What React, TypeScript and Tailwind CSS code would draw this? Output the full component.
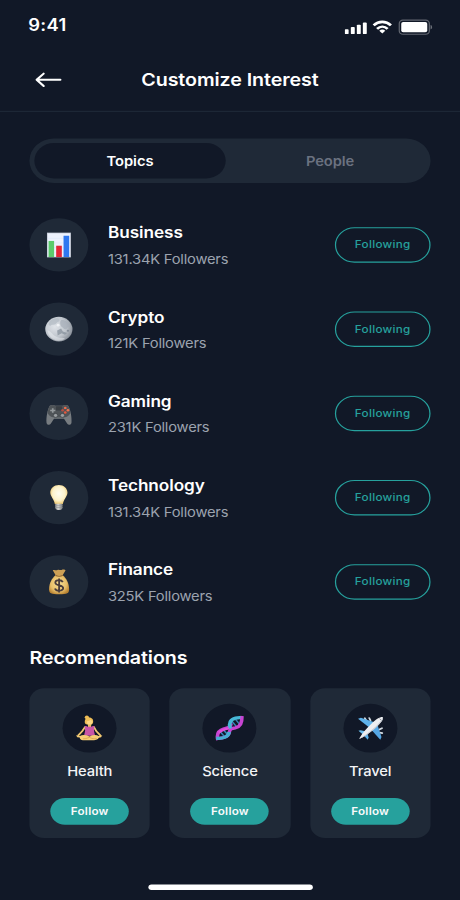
import React from 'react';

function ChartIcon() {
  return (
    <svg viewBox="0 0 24 24" className="size-6">
      <rect x="2.3" y="0.9" width="19.5" height="22.3" fill="#c9cfdb" />
      <rect x="3" y="1.6" width="18.1" height="21" fill="#edf2fd" />
      <path d="M3 6H21M3 10.2H21M3 14.4H21M3 18.6H21" stroke="#dbe4f6" strokeWidth="0.4" />
      <rect x="3.6" y="8.4" width="4.5" height="14.5" fill="#5ccb6b" />
      <rect x="9.8" y="12.7" width="4.6" height="10.2" fill="#e32636" />
      <rect x="15.8" y="3.7" width="4.6" height="19.2" fill="#2f78f0" />
    </svg>
  );
}

function MoonIcon() {
  return (
    <svg viewBox="0 0 24 24" className="size-6">
      <defs>
        <radialGradient id="moon" cx="0.35" cy="0.4" r="0.7">
          <stop offset="0" stopColor="#dfe3e8" />
          <stop offset="0.6" stopColor="#c0c6cd" />
          <stop offset="1" stopColor="#858c95" />
        </radialGradient>
      </defs>
      <circle cx="12" cy="11.9" r="11.1" fill="url(#moon)" />
      <path d="M5 4.5C8 1.8 11 1.6 12.4 3.2C13 5 10.5 5.2 9.6 7.2C8.6 8.8 6.8 7.2 5.2 8.8C3.6 9.2 3 7 5 4.5Z" fill="#b2bac3" opacity="0.7" />
      <path d="M14 3.6C17 3.6 20 5.4 20.8 8.6C21 10.6 19 9.6 18.6 11.4C17.2 13 15.6 11 14.6 10C12.8 8.6 12.6 5 14 3.6Z" fill="#a3abb6" opacity="0.65" />
      <path d="M10.6 13.2L13.8 11.4L15.2 14.2L18.8 15.4L17 17L14.2 15.6L11 17.6Z" fill="#87919c" opacity="0.75" />
      <path d="M2.6 13C6 14 7 18 11 19.2C14 20 15.6 19.4 17 20.6C11 25 3.6 20.6 2.6 13Z" fill="#eceff3" opacity="0.5" />
      <circle cx="11.4" cy="8.4" r="1.2" fill="#eef1f4" />
      <circle cx="19.4" cy="13.4" r="1" fill="#848d98" />
    </svg>
  );
}

function GamepadIcon() {
  return (
    <svg viewBox="0 0 24 24" className="size-6">
      <path d="M4.6 5C6 4.2 8 4.4 9 5.1H15.2C16.4 4.3 18.4 4.2 19.6 5C21.6 8.6 22.6 15.4 22.3 20.2C22.2 22.4 19.8 23 18.7 21.2L16.2 16.8H8L5.5 21.2C4.4 23 2 22.4 1.9 20.2C1.6 15.4 2.6 8.6 4.6 5Z" fill="#777c80" />
      <path d="M4.6 5C6 4.2 8 4.4 9 5.1H15.2C16.4 4.3 18.4 4.2 19.6 5C20.6 7 21.4 9.8 21.3 12C19.4 14.8 17.8 15.6 15.4 15.6H8.8C6.4 15.6 4.8 14.8 2.9 12C2.8 9.8 3.6 7 4.6 5Z" fill="#4f5458" />
      <rect x="9.6" y="5.6" width="5" height="3.8" rx="0.5" fill="#3a3f44" />
      <path d="M7 7.3V11.5M4.9 9.4H9.1" stroke="#94999c" strokeWidth="1.4" />
      <circle cx="17.2" cy="7" r="1.1" fill="#ed6a4c" />
      <circle cx="17.2" cy="11.2" r="1.1" fill="#e8583c" />
      <circle cx="15" cy="9.1" r="1.1" fill="#b44e43" />
      <circle cx="19.4" cy="9.1" r="1.1" fill="#f0714f" />
      <circle cx="9.3" cy="13.8" r="1.8" fill="#9a9ea1" stroke="#3a3f43" strokeWidth="0.6" />
      <circle cx="14.9" cy="13.8" r="1.8" fill="#9a9ea1" stroke="#3a3f43" strokeWidth="0.6" />
    </svg>
  );
}

function BulbIcon() {
  return (
    <svg viewBox="0 0 24 24" className="size-6">
      <defs>
        <radialGradient id="glow" cx="0.5" cy="0.45" r="0.58">
          <stop offset="0" stopColor="#fffdf0" />
          <stop offset="0.62" stopColor="#fdf3cb" />
          <stop offset="1" stopColor="#eec568" />
        </radialGradient>
        <linearGradient id="cap" x1="0" x2="1">
          <stop offset="0" stopColor="#85888a" />
          <stop offset="0.4" stopColor="#d8d8d5" />
          <stop offset="1" stopColor="#73777b" />
        </linearGradient>
      </defs>
      <path d="M12 0.5C16 0.5 19 3.5 19 7.4C19 10.9 15.9 13.5 15.3 17.8H8.7C8.1 13.5 5 10.9 5 7.4C5 3.5 8 0.5 12 0.5Z" fill="url(#glow)" />
      <path d="M9 17.5H15V21.2C15 22.5 13.4 23.2 12 23.2C10.6 23.2 9 22.5 9 21.2Z" fill="url(#cap)" />
      <path d="M9 19.2H15M9 20.9H15" stroke="#8d8f8f" strokeWidth="0.5" />
    </svg>
  );
}

function MoneyBagIcon() {
  return (
    <svg viewBox="0 0 24 24" className="size-6">
      <defs>
        <radialGradient id="bag" cx="0.48" cy="0.45" r="0.6">
          <stop offset="0" stopColor="#f8df94" />
          <stop offset="0.65" stopColor="#e8bf6a" />
          <stop offset="1" stopColor="#b98332" />
        </radialGradient>
      </defs>
      <path d="M7 1.6C8.4 0.6 9.4 2 10.8 1.3C12 0.6 13 1.7 14.2 1.2C15.6 0.6 17.2 1 17.4 1.8L14.8 6.4H9.6Z" fill="#cda055" />
      <path d="M9.4 5.8H15C18 8.6 20.3 13 20.3 18.6C20.3 22.4 18.8 23.1 12.2 23.1C5.6 23.1 4 22.4 4 18.6C4 13 6.4 8.6 9.4 5.8Z" fill="url(#bag)" />
      <path d="M9.3 6.2C11 6.9 13.6 6.9 15.2 6.1" stroke="#8c6230" strokeWidth="0.9" fill="none" />
      <path d="M15.2 12.2C14.6 10.9 13.5 10.4 12.2 10.4C10.4 10.4 9.1 11.3 9.1 12.8C9.1 16 15.5 14.2 15.5 17.6C15.5 19.1 14.1 20 12.2 20C10.6 20 9.3 19.3 8.8 17.9M12.2 8.9V21.5" stroke="#4a3d3c" strokeWidth="1.5" fill="none" />
    </svg>
  );
}

function YogaIcon() {
  return (
    <svg viewBox="0 0 24 24" className="size-6">
      <circle cx="9.8" cy="2.2" r="1.7" fill="#eebc55" />
      <path d="M8.2 7.4C7.6 3.8 9.6 2.3 11.6 2.3C14.2 2.3 15.4 4.4 14.8 7.2C14.3 9.4 8.8 9.6 8.2 7.4Z" fill="#f0bf58" />
      <path d="M9.6 5.8C11 5.8 12.2 5.1 12.9 4.4C13.4 5 14 5.3 14.4 5.7C14.3 8.2 13.2 9.4 12 9.4C10.8 9.4 9.8 8.2 9.6 5.8Z" fill="#fbd885" />
      <path d="M10.7 8.6H13.3V11H10.7Z" fill="#edbb62" />
      <path d="M8.4 10.8L6 14.8L2.8 18.5M15.5 10.8L17.6 14.8L20.8 18.5" stroke="#f0c670" strokeWidth="1.5" fill="none" strokeLinejoin="round" strokeLinecap="round" />
      <path d="M8 10.2C9.4 9.8 10 10.2 10.4 10.8H13.5C14 10.2 14.8 9.8 16 10.2L15.6 14.4L16.5 18.8H7.5L8.4 14.4Z" fill="#c755a7" />
      <path d="M1 18.4L4.2 19.1C6 17.8 9.2 17.9 11.9 19.5C14.6 17.9 17.6 17.8 19.4 19.1L22.4 18.4L21.4 20.2L19.6 20.6C18.8 22.4 16.6 22.9 13.6 22.9H6.6C4.8 22.9 4 21.8 4 20.5L2 20.2Z" fill="#f6cd74" />
      <path d="M6.6 21.6C9.4 21.7 11 20.5 12.8 19.8M17.8 21.4C15.4 21.8 14 21.3 12.6 20.7" stroke="#c98f3e" strokeWidth="0.5" fill="none" />
    </svg>
  );
}

function DnaIcon() {
  return (
    <svg viewBox="0 0 24 24" className="size-6">
      <g fill="none">
        <path d="M4.6 15.2L8 19.6M7.4 13.8L10.4 17.4M14.2 5.8L17.6 10.4M17.2 4.2L20.4 8.6" stroke="#3485b6" strokeWidth="1.3" />
        <path d="M2.6 22.8C1.4 17.4 3.4 13.8 7.6 12.5C11 11.5 13.2 11.2 13.4 7.6" stroke="#c744d2" strokeWidth="2.9" />
        <path d="M1.2 21C7 21.6 11.2 19.6 11.9 15.8C12.4 12.6 13.8 12.2 16.8 11.7C20.4 11 22.6 7.6 22.1 1.4" stroke="#c744d2" strokeWidth="2.9" />
        <path d="M1.2 21C7 21.6 11.2 19.6 11.9 15.4" stroke="#44aed2" strokeWidth="3" />
        <path d="M12.6 12.4C11.4 7.4 12.8 3.9 17 2.9C19.2 2.4 20.8 2.6 22 2.4" stroke="#47b8d8" strokeWidth="3" />
        <path d="M3.4 16C5.6 13.4 9 12.8 11.6 12" stroke="#e04ed8" strokeWidth="2" />
        <path d="M22.3 1L21.9 5" stroke="#c744d2" strokeWidth="2.4" />
      </g>
    </svg>
  );
}

function PlaneIcon() {
  return (
    <svg viewBox="0 0 24 24" className="size-6">
      <path d="M7.4 3L8.6 5.2M11 2.8L12 5M21.4 12L19.2 13.2M21.6 16.4L19.6 16" stroke="#d3dae1" strokeWidth="1.5" strokeLinecap="round" />
      <path d="M1.9 3.4L4.2 2.5L16.4 7L11.8 12Z" fill="#5fb2ea" />
      <path d="M17.4 8L21 20L20 22.4L12 12.4Z" fill="#55a6e4" />
      <path d="M2.2 14.4L4 13.9L9.6 15.2L6.6 18.4Z" fill="#6cbdee" />
      <path d="M9 14.8L10.5 20.4L9.8 22.4L6 17.8Z" fill="#5aaee8" />
      <path d="M2.8 21.8C4.2 18.2 8.4 12.6 12.8 8C16.2 4.3 19.6 1.8 22 2C23 3.9 20.2 7.8 16.8 11.1C12 15.7 6.4 20.2 2.8 21.8Z" fill="#edeef1" />
      <path d="M2.8 21.8C7 18.9 13 13.8 16.6 10.2C19.2 7.4 21.2 5 22 2C23 3.9 20.2 7.8 16.8 11.1C12 15.7 6.4 20.2 2.8 21.8Z" fill="#c2c6cd" />
      <path d="M19.4 3.4L20.7 4.7" stroke="#6b7280" strokeWidth="0.6" />
    </svg>
  );
}

const topics = [
  { name: 'Business', followers: '131.34K Followers', Icon: ChartIcon },
  { name: 'Crypto', followers: '121K Followers', Icon: MoonIcon },
  { name: 'Gaming', followers: '231K Followers', Icon: GamepadIcon },
  { name: 'Technology', followers: '131.34K Followers', Icon: BulbIcon },
  { name: 'Finance', followers: '325K Followers', Icon: MoneyBagIcon },
];

const suggestions = [
  { name: 'Health', Icon: YogaIcon },
  { name: 'Science', Icon: DnaIcon },
  { name: 'Travel', Icon: PlaneIcon },
];

function StatusBar() {
  return (
    <div className="flex h-11 items-start justify-between pl-[23px] pr-[22px]">
      <span className="pt-[13px] text-[15px] font-semibold leading-5 tracking-[0.25px]">9:41</span>
      <svg viewBox="281 17 72 15" className="mt-[17px] h-[15px] w-[72px]">
        <g fill="#fff">
          <rect x="281" y="26.3" width="3.2" height="4.4" rx="0.8" />
          <rect x="286" y="24.3" width="3.2" height="6.4" rx="0.8" />
          <rect x="290.9" y="22.3" width="3.2" height="8.4" rx="0.8" />
          <rect x="295.8" y="20.4" width="3.2" height="10.3" rx="0.8" />
        </g>
        <g fill="none" stroke="#fff" strokeWidth="2.3">
          <path d="M304.6 22.8C308.6 18.7 314.7 18.7 318.7 22.8" />
          <path d="M307.4 26C310 23.4 313.4 23.4 316 26" />
        </g>
        <path d="M309.2 27.7C310.8 26.4 312.6 26.4 314.1 27.7L311.65 30.2Z" fill="#fff" />
        <rect x="325.5" y="18.2" width="24.5" height="12.7" rx="3" fill="none" stroke="#fff" strokeOpacity="0.34" />
        <rect x="327.1" y="19.9" width="21.2" height="9.2" rx="1.6" fill="#fff" />
        <path d="M351 22.6C352.7 23.1 352.7 26.1 351 26.6Z" fill="#fff" fillOpacity="0.38" />
      </svg>
    </div>
  );
}

export default function App() {
  return (
    <div className="h-[900px] w-[460px] overflow-hidden bg-[#111827]">
      <div className="flex h-[812px] w-[375px] origin-top-left scale-x-[1.22667] scale-y-[1.10837] flex-col font-['Inter',sans-serif] text-white">
        <StatusBar />
        <header className="grid h-[57px] grid-cols-[1fr_auto_1fr] items-center border-b border-[#1f2937] px-6">
          <button aria-label="Back" className="pl-1">
            <svg viewBox="0 0 24 24" className="size-6" fill="none" stroke="#fff" strokeWidth="1.8" strokeLinecap="round" strokeLinejoin="round">
              <path d="M21.2 12H2M7.6 6.4L1.9 12L7.6 17.6" />
            </svg>
          </button>
          <h1 className="pt-[0.4px] text-base font-semibold leading-6 tracking-[-0.05px]">Customize Interest</h1>
        </header>

        <div className="mx-6 mt-6 grid h-10 grid-cols-[156px_1fr] rounded-full bg-[#1f2937] p-1 text-xs font-semibold">
          <button className="rounded-full bg-[#111827] pt-px">Topics</button>
          <button className="pl-[7px] pt-px tracking-[-0.1px] text-[#6b7280]">People</button>
        </div>

        <ul className="mx-6 mt-8 flex flex-col gap-7">
          {topics.map(({ name, followers, Icon }) => (
            <li key={name} className="flex h-12 items-center">
              <div className="flex size-12 items-center justify-center rounded-full bg-[#1f2937]">
                <Icon />
              </div>
              <div className="ml-4 flex-1 pt-[1.2px]">
                <p className="text-sm font-semibold leading-6 tracking-[-0.05px]">{name}</p>
                <p className="text-xs leading-[23.5px] tracking-[-0.17px] text-[#9ca3af]">{followers}</p>
              </div>
              <button className="h-8 w-[78px] rounded-full border border-[#26a19d] pt-[0.5px] text-[9.5px] font-medium tracking-[0.25px] text-[#26a19d]">Following</button>
            </li>
          ))}
        </ul>

        <h2 className="mx-6 mt-8 text-base font-semibold leading-6 tracking-[-0.07px]">Recomendations</h2>
        <div className="mx-6 mt-4 grid grid-cols-3 gap-4">
          {suggestions.map(({ name, Icon }) => (
            <div key={name} className="flex h-[135px] flex-col items-center rounded-xl bg-[#1f2937] pt-3.5">
              <div className="flex size-11 items-center justify-center rounded-full bg-[#111827]">
                <Icon />
              </div>
              <p className="mt-[8.4px] text-xs font-medium leading-[18px] tracking-[-0.1px] text-gray-100">{name}</p>
              <button className="mt-[14.6px] h-6 w-16 rounded-full bg-[#26a19d] pt-[0.5px] text-[9.5px] font-semibold tracking-[0.2px] text-gray-50">Follow</button>
            </div>
          ))}
        </div>
        <div className="mx-auto mb-[9px] mt-auto h-[5px] w-[134px] rounded-full bg-white" />
      </div>
    </div>
  );
}
